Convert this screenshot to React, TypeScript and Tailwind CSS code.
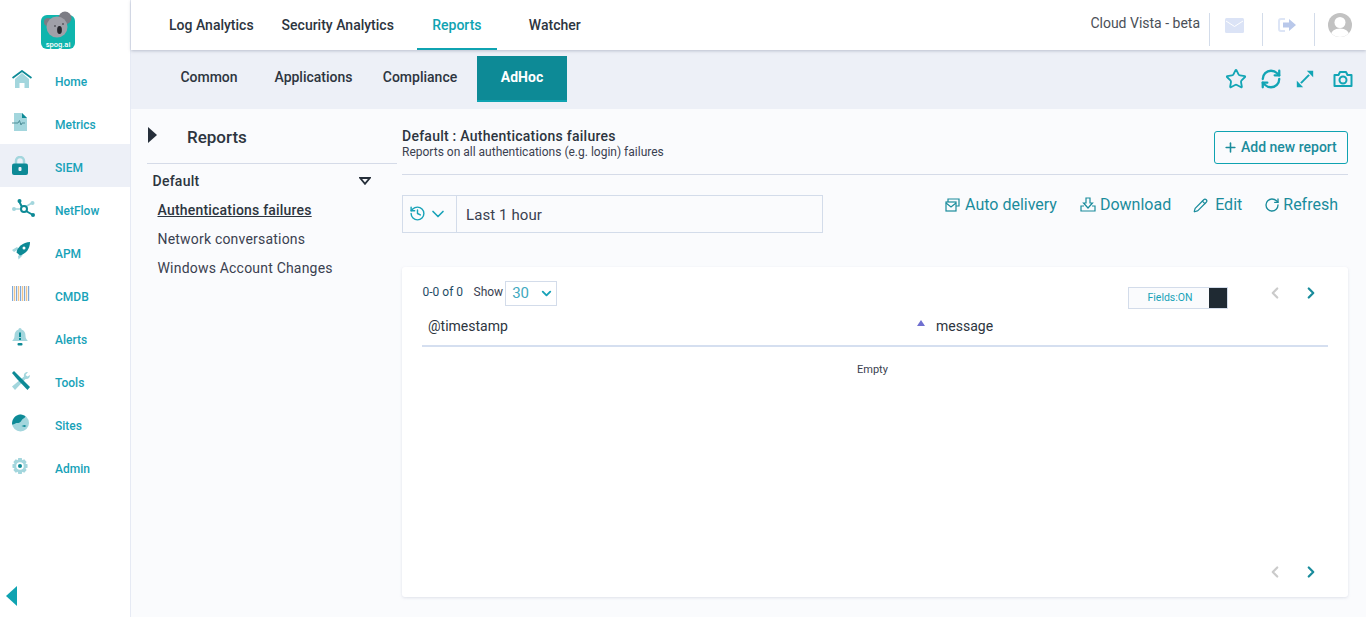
import React from 'react';
import { Star, RefreshCw, Plus, Pencil, RotateCw, History, ChevronDown, ChevronLeft, ChevronRight } from 'lucide-react';

const L = '#a3d6dd';
const D = '#0d8a96';

function Logo() {
  return (
    <svg width="38" height="40" viewBox="0 0 38 40">
      <rect x="2" y="5" width="34" height="34" rx="6" fill="#0fb5ad" />
      <circle cx="26" cy="8" r="6.500" fill="#7c7c84" />
      <circle cx="9" cy="12" r="4" fill="#7c7c84" />
      <circle cx="18" cy="17" r="10.500" fill="#a0a0a8" />
      <ellipse cx="20.500" cy="20" rx="2.400" ry="4" fill="#26262c" />
      <circle cx="16" cy="16" r="0.800" fill="#26262c" />
      <circle cx="24" cy="14" r="0.800" fill="#26262c" />
      <text x="19" y="36.500" textAnchor="middle" fontSize="7.500" fontWeight="500" fill="#ffffff" fontFamily="Roboto, sans-serif">spog.ai</text>
    </svg>
  );
}

const navIcons: Record<string, React.ReactNode> = {
  Home: (
    <svg width="20" height="18" viewBox="0 0 20 18">
      <path d="M3 9 10 3l7 6v9h-4.500v-5h-5v5H3z" fill={L} />
      <path d="M.5 8 10 1l9.500 7" fill="none" stroke={D} strokeWidth="1.800" />
    </svg>
  ),
  Metrics: (
    <svg width="16" height="18" viewBox="0 0 16 18">
      <path d="M2 0h8l5 5v13H2z" fill={L} />
      <path d="M10 0l5 5h-5z" fill={D} />
      <path d="M0 10h6l1.500-2.500L9 12l1-2h3" fill="none" stroke="#4f8f98" strokeWidth="1" />
    </svg>
  ),
  SIEM: (
    <svg width="16" height="19" viewBox="0 0 16 19">
      <path d="M4 8V5a4 4 0 0 1 8 0v3" fill="none" stroke={L} strokeWidth="2.500" />
      <rect x="0" y="7.500" width="16" height="11.500" rx="2" fill={D} />
      <rect x="6.500" y="11" width="3" height="4" rx="1" fill="#edf0f7" />
    </svg>
  ),
  NetFlow: (
    <svg width="23" height="18" viewBox="0 0 23 18">
      <path d="M2 10h8M13 8l7-4" stroke={L} strokeWidth="1.500" />
      <circle cx="2" cy="10" r="2" fill={L} />
      <circle cx="20.500" cy="4" r="2" fill={L} />
      <path d="M7 2l3 6M14 12l7 4" stroke={D} strokeWidth="2" />
      <circle cx="7.500" cy="2" r="2" fill={D} />
      <circle cx="21" cy="16" r="2" fill={D} />
      <circle cx="12" cy="10" r="3" fill="#ffffff" stroke={D} strokeWidth="2" />
    </svg>
  ),
  APM: (
    <svg width="18" height="18" viewBox="0 0 18 18">
      <path d="M0 8l5-3 2 2-5 3zM9 12l1.500 1.500-4 4-.5-3.500z" fill={L} />
      <path d="M4.500 10.500C5.500 4.500 11 .5 18 0c0 7-4 11.500-10 13.500z" fill={D} />
      <circle cx="12" cy="6" r="1.500" fill="#ffffff" />
    </svg>
  ),
  CMDB: (
    <svg width="18" height="18" viewBox="0 0 18 18">
      {[0, 2, 4, 6, 8, 10, 12, 14, 16].map((x, i) => (
        <rect key={x} x={x} y="1" width="1.200" height="15" fill={i % 2 ? '#f0c48a' : '#7fa9d8'} />
      ))}
    </svg>
  ),
  Alerts: (
    <svg width="16" height="18" viewBox="0 0 16 18">
      <path d="M8 0c1 0 1.500 .8 1.500 1.500C12.500 2.500 13.500 5 13.500 8c0 2.500 1.500 4 2.500 5H0c1-1 2.500-2.500 2.500-5 0-3 1-5.500 4-6.500C6.500 .8 7 0 8 0z" fill={L} />
      <rect x="7" y="4.500" width="2" height="4.500" fill={D} />
      <rect x="7" y="10" width="2" height="2" fill={D} />
      <rect x="5.500" y="15" width="5" height="2.500" rx="1" fill={D} />
    </svg>
  ),
  Tools: (
    <svg width="18" height="19" viewBox="0 0 18 19">
      <path d="M16 1c-3 0-4.500 2-4 4.500L0 15.500 3 19l10.500-11c2.500 .5 4.500-1 4.500-4l-2.500 1.500-2-1.500z" fill={L} />
      <path d="M0 2l2-2 5 5 11 11-2.500 3L5 8z" fill={D} />
    </svg>
  ),
  Sites: (
    <svg width="17" height="18" viewBox="0 0 17 18">
      <circle cx="8.500" cy="9" r="8.500" fill={L} />
      <path d="M0 10.500C0 5 3.500 .8 8.500 .5c2 0 4 1 5 2-1 2-3 2-4 4S7 9 5 9s-2 1.500-5 1.500z" fill={D} />
      <path d="M9.500 12l3-1 2 1-2 1z" fill={D} />
    </svg>
  ),
  Admin: (
    <svg width="16" height="18" viewBox="0 0 18 18">
      <path d="M7 0h4l.5 2.500 2.300-1 2.700 2.900-1.400 2.100L17.500 7v4l-2.400.5 1.400 2.100-2.700 2.900-2.300-1L11 18H7l-.5-2.500-2.300 1-2.700-2.900 1.400-2.100L.5 11V7l2.400-.5L1.500 4.400l2.700-2.900 2.300 1z" fill={L} />
      <circle cx="9" cy="9" r="4.200" fill="#ffffff" />
      <circle cx="9" cy="9" r="2.300" fill={D} />
    </svg>
  ),
};

const navItems = ['Home', 'Metrics', 'SIEM', 'NetFlow', 'APM', 'CMDB', 'Alerts', 'Tools', 'Sites', 'Admin'];

function Sidebar() {
  return (
    <aside className="w-[131px] h-[617px] shrink-0 bg-white border-r border-[#e6eaf4] flex flex-col">
      <div className="h-[58px] pt-[10px] pl-[39px]">
        <Logo />
      </div>
      {navItems.map((name) => (
        <div key={name} className={`h-[43px] flex items-center ${name === 'SIEM' ? 'bg-[#edf0f7]' : ''}`}>
          <div className="w-[55px] pl-[12px] pb-[1px] flex items-center">{navIcons[name]}</div>
          <span className="text-[12px] font-medium text-[#17a2b8] pt-[5px]">{name}</span>
        </div>
      ))}
      <div className="mt-auto pl-[6px] pb-[11px]">
        <div className="w-0 h-0 border-y-[10px] border-y-transparent border-r-[11px] border-r-[#0fa3b1]" />
      </div>
    </aside>
  );
}

function TopBar() {
  const tabs = ['Log Analytics', 'Security Analytics', 'Reports', 'Watcher'];
  return (
    <header className="h-[50px] bg-white shadow-[0_1px_3px_rgba(90,100,130,0.35)] relative z-10 flex justify-between">
      <nav className="flex pl-[24px]">
        {tabs.map((t) => (
          <div
            key={t}
            className={`h-[50px] pt-[17px] text-[14px] font-medium leading-[16px] ${
              t === 'Reports' ? 'text-[#0fa3b1] border-b-2 border-[#0fa3b1] w-[80px] text-center ml-[9px] mr-[18px]' : 'text-[#2d3540] px-[14px]'
            }`}
          >
            {t}
          </div>
        ))}
      </nav>
      <div className="flex items-start pt-[13px]">
        <span className="text-[14px] leading-[18px] text-[#4a4f57] mt-[1px] mr-[9px]">Cloud Vista - beta</span>
        <div className="w-[53px] h-[33px] border-l border-[#d3dcea] flex justify-center pt-[5px] pr-[3px]">
          <svg width="19" height="15" viewBox="0 0 19 15">
            <rect width="19" height="15" rx="1.500" fill="#dbe3f6" />
            <path d="M1 3l8.500 5.500L18 3" fill="none" stroke="#ffffff" strokeWidth="1" />
          </svg>
        </div>
        <div className="w-[52px] h-[33px] border-l border-[#d3dcea] flex justify-center pt-[5px] pr-[3px]">
          <svg width="19" height="14" viewBox="0 0 19 14">
            <path d="M7 1H3a2 2 0 0 0-2 2v8a2 2 0 0 0 2 2h4" fill="none" stroke="#dde5f6" strokeWidth="2" />
            <path d="M11 1l7 6-7 6V9.500H5v-5h6z" fill="#b9c8ea" />
          </svg>
        </div>
        <div className="w-[52px] h-[33px] border-l border-[#d3dcea] pl-[13px]">
          <svg width="24" height="24" viewBox="0 0 24 24">
            <defs>
              <clipPath id="avatarClip">
                <circle cx="12" cy="12" r="12" />
              </clipPath>
            </defs>
            <circle cx="12" cy="12" r="12" fill="#c2c2c2" />
            <g clipPath="url(#avatarClip)" fill="#ffffff">
              <circle cx="12" cy="9.500" r="5.500" />
              <path d="M2 26c0-7 4-10.500 10-10.500S22 19 22 26z" />
            </g>
          </svg>
        </div>
      </div>
    </header>
  );
}

function SubBar() {
  const tabs = [
    { name: 'Common', w: 'w-[104px]' },
    { name: 'Applications', w: 'w-[105px]' },
    { name: 'Compliance', w: 'w-[108px]' },
  ];
  return (
    <div className="h-[59px] bg-[#edf0f7] flex justify-between items-start">
      <div className="flex pl-[26px] pt-[6px]">
        {tabs.map((t) => (
          <div key={t.name} className={`${t.w} h-[46px] pt-[12px] text-center text-[14px] leading-[18px] font-medium text-[#2d3540]`}>
            {t.name}
          </div>
        ))}
        <div className="ml-[3px] w-[90px] h-[46px] pt-[12px] text-center text-[14px] leading-[18px] font-bold text-white bg-[#0d8a96] border-b-2 border-[#0fa3b1]">
          AdHoc
        </div>
      </div>
      <div className="flex items-center gap-[13px] pt-[18px] pr-[12px] text-[#12a5b5]">
        <Star size={22} strokeWidth={2} />
        <RefreshCw size={22} strokeWidth={2.5} />
        <svg width="20" height="20" viewBox="0 0 22 22" fill="currentColor">
          <path d="M6.500 15.500 15.500 6.500" stroke="currentColor" strokeWidth="2.200" />
          <path d="M13 2h7v7zM2 13v7h7z" />
        </svg>
        <svg width="22" height="22" viewBox="0 0 22 22" fill="none" stroke="currentColor" strokeWidth="2" className="ml-[4px]">
          <path d="M2.500 7h4l1.500-3h6l1.500 3h4v11h-17z" strokeLinejoin="round" />
          <circle cx="11" cy="12" r="3.500" />
        </svg>
      </div>
    </div>
  );
}

function ReportList() {
  return (
    <div className="w-[250px] ml-[16px] shrink-0">
      <div className="h-[55px] border-b border-[#d5dbe8] flex pt-[16px]">
        <div className="mt-[2px] ml-[1px] w-0 h-0 border-y-[8px] border-y-transparent border-l-[9px] border-l-[#262f3a]" />
        <span className="ml-[30px] text-[17px] leading-[24px] font-medium text-[#2d3540]">Reports</span>
      </div>
      <div className="flex items-center justify-between h-[34px] pl-[5.500px] pr-[26px]">
        <span className="text-[14px] font-medium tracking-[0.25px] text-[#2d3540]">Default</span>
        <svg width="12" height="8" viewBox="0 0 12 8">
          <path d="M1.200 1h9.600L6 6.800z" fill="none" stroke="#262f3a" strokeWidth="1.800" />
        </svg>
      </div>
      <div className="pl-[10.500px] mt-[-2px] text-[14px] leading-[29px] tracking-[0.2px] text-[#3a4150]">
        <div className="font-medium text-[#2d3540] underline">Authentications failures</div>
        <div>Network conversations</div>
        <div>Windows Account Changes</div>
      </div>
    </div>
  );
}

function ActionLink({ icon, label }: { icon: React.ReactNode; label: string }) {
  return (
    <div className="flex items-center gap-[4px] h-[20px] text-[16px] leading-[20px] text-[#1a8c9c]">
      {icon}
      <span>{label}</span>
    </div>
  );
}

function ReportPanel() {
  return (
    <div className="w-[946px] ml-[5px] shrink-0">
      <div className="h-[66px] border-b border-[#d5dbe8] flex justify-between pt-[19px]">
        <div>
          <div className="text-[14px] leading-[16px] font-medium tracking-[0.25px] text-[#2d3540]">Default : Authentications failures</div>
          <div className="text-[12px] leading-[16px] text-[#3a4150]">Reports on all authentications (e.g. login) failures</div>
        </div>
        <div className="w-[134px] h-[33px] mt-[3px] border border-[#0fa3b1] rounded-[3px] flex items-center pl-[8px] gap-[3px] text-[14px] font-medium text-[#1a8c9c]">
          <Plus size={15} strokeWidth={2.500} />
          <span>Add new report</span>
        </div>
      </div>

      <div className="flex justify-between mt-[20px] h-[38px]">
        <div className="w-[421px] h-[38px] border border-[#d3dcea] flex">
          <div className="w-[54px] border-r border-[#d3dcea] flex items-center pl-[6px] gap-[2px] pb-[1px] text-[#17a2b8]">
            <History size={17} />
            <ChevronDown size={20} />
          </div>
          <div className="pl-[9px] text-[15px] leading-[38px] tracking-[0.1px] text-[#3a4150]">Last 1 hour</div>
        </div>
        <div className="flex items-start gap-[22px] pr-[10px]">
          <ActionLink
            label="Auto delivery"
            icon={
              <svg width="16" height="16" viewBox="0 0 16 16" fill="none" stroke="currentColor" strokeWidth="1.200">
                <path d="M3 5V2h11v7h-3" />
                <rect x="1" y="5" width="10" height="9" />
                <path d="M1 6l5 4 5-4" />
              </svg>
            }
          />
          <ActionLink
            label="Download"
            icon={
              <svg width="16" height="16" viewBox="0 0 16 16" fill="none" stroke="currentColor" strokeWidth="1.200" className="ml-[1px]">
                <path d="M6 1h4v5h2.500L8 11 3.500 6H6z" />
                <path d="M4 9H1v5h14V9h-3" />
              </svg>
            }
          />
          <ActionLink label="Edit" icon={<Pencil size={15} className="mr-[3px]" />} />
          <ActionLink label="Refresh" icon={<RotateCw size={16} className="mr-[-1px]" />} />
        </div>
      </div>

      <div className="mt-[34px] h-[330px] bg-white rounded-[3px] shadow-[0_1px_3px_rgba(120,130,160,0.2)] flex flex-col px-[20px]">
        <div className="flex justify-between h-[41px]">
          <div className="flex items-start pt-[14px]">
            <span className="text-[12px] leading-[14px] text-[#1f4d66] mt-[4px] ml-[0.500px]">0-0 of 0</span>
            <span className="text-[12px] leading-[14px] text-[#3a4150] ml-[10.500px] mt-[4px]">Show</span>
            <div className="ml-[2px] w-[52px] h-[25px] border border-[#d3dcea] flex items-center justify-between pl-[6px] pr-[2px] text-[15px] text-[#3fa9c0]">
              <span>30</span>
              <ChevronDown size={15} strokeWidth={3} className="text-[#17a2b8]" />
            </div>
          </div>
          <div className="flex items-start pt-[20px] pr-[8px]">
            <div className="w-[100px] h-[22px] border border-[#d3dcea] bg-[#fafbfd] flex">
              <span className="flex-1 text-center text-[10.500px] leading-[20px] text-[#17a2b8] pl-[2px]">Fields:ON</span>
              <div className="w-[18px] bg-[#1f2a33]" />
            </div>
            <ChevronLeft size={18} strokeWidth={3} className="ml-[38px] mt-[-3px] text-[#cbcbcb]" />
            <ChevronRight size={18} strokeWidth={3} className="ml-[18px] mt-[-3px] text-[#1a8c9c]" />
          </div>
        </div>
        <div className="h-[39px] flex items-center border-b-2 border-[#d5dff0] text-[14px] text-[#2d3540]">
          <span className="pl-[6px] w-[495px]">@timestamp</span>
          <div className="w-0 h-0 mb-[8px] border-x-[4.500px] border-x-transparent border-b-[6px] border-b-[#6f6fd0]" />
          <span className="ml-[11px]">message</span>
        </div>
        <div className="text-center text-[11px] leading-[12px] text-[#3a4150] mt-[17px] mr-[5px]">Empty</div>
        <div className="mt-auto flex justify-end pb-[16px] pr-[8px]">
          <ChevronLeft size={18} strokeWidth={3} className="text-[#cbcbcb]" />
          <ChevronRight size={18} strokeWidth={3} className="ml-[18px] text-[#1a8c9c]" />
        </div>
      </div>
    </div>
  );
}

export default function App() {
  return (
    <div className="flex h-[617px] w-[1366px] overflow-hidden bg-[#fafbfd] font-['Roboto',sans-serif]">
      <Sidebar />
      <div className="flex-1 flex flex-col min-w-0">
        <TopBar />
        <SubBar />
        <div className="flex">
          <ReportList />
          <ReportPanel />
        </div>
      </div>
    </div>
  );
}
